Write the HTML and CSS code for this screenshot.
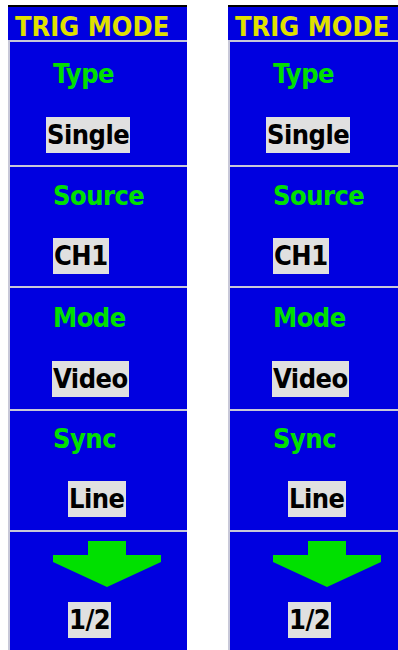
FILE: index.html
```html
<!DOCTYPE html>
<html>
<head>
  <title>Trig Mode Menu</title>
  <link rel="stylesheet" href="styles.css">
</head>
<body>
  <div class="screens">
    <div class="menu">
      <div class="menu-title">TRIG MODE</div>
      <div class="menu-item item-type">
        <div class="item-label">Type</div>
        <span class="item-value value-single">Single</span>
      </div>
      <div class="menu-item item-source">
        <div class="item-label">Source</div>
        <span class="item-value value-ch">CH1</span>
      </div>
      <div class="menu-item item-mode">
        <div class="item-label">Mode</div>
        <span class="item-value value-video">Video</span>
      </div>
      <div class="menu-item item-sync">
        <div class="item-label">Sync</div>
        <span class="item-value value-line">Line</span>
      </div>
      <div class="menu-item item-page">
        <svg class="page-arrow" width="108" height="46" viewBox="0 0 108 46">
          <polygon points="35,0 73,0 73,14 108,14 108,21 54,46 0,21 0,14 35,14" fill="#00e000"/>
        </svg>
        <span class="item-value value-page">1/2</span>
      </div>
    </div>

    <div class="menu">
      <div class="menu-title">TRIG MODE</div>
      <div class="menu-item item-type">
        <div class="item-label">Type</div>
        <span class="item-value value-single">Single</span>
      </div>
      <div class="menu-item item-source">
        <div class="item-label">Source</div>
        <span class="item-value value-ch">CH1</span>
      </div>
      <div class="menu-item item-mode">
        <div class="item-label">Mode</div>
        <span class="item-value value-video">Video</span>
      </div>
      <div class="menu-item item-sync">
        <div class="item-label">Sync</div>
        <span class="item-value value-line">Line</span>
      </div>
      <div class="menu-item item-page">
        <svg class="page-arrow" width="108" height="46" viewBox="0 0 108 46">
          <polygon points="35,0 73,0 73,14 108,14 108,21 54,46 0,21 0,14 35,14" fill="#00e000"/>
        </svg>
        <span class="item-value value-page">1/2</span>
      </div>
    </div>
  </div>
</body>
</html>
```

FILE: styles.css
```css
html, body {
  margin: 0;
  height: 100%;
  background: #fff;
  overflow: hidden;
}

body {
  font-family: "DejaVu Sans Condensed", "DejaVu Sans", sans-serif;
  font-stretch: condensed;
  font-weight: bold;
  font-size: 27px;
}

.screens {
  display: flex;
  gap: 41px;
  padding: 5px 0 0 8px;
  height: 100%;
  box-sizing: border-box;
}

.menu {
  flex: 0 0 179px;
  display: flex;
  flex-direction: column;
  background: #0000e0;
}

.menu-title {
  height: 30px;
  padding: 3px 0 0 7px;
  border-top: 2px solid #000;
  color: #e0e000;
  line-height: 33px;
  white-space: nowrap;
}

.menu-item {
  box-sizing: border-box;
  border-top: 2px solid #c8c8d8;
  border-left: 2px solid #c8c8d8;
  padding-left: 43px;
  display: flex;
  flex-direction: column;
  align-items: flex-start;
  letter-spacing: -0.5px;
}

.item-label {
  color: #00e000;
  line-height: 27px;
}

.item-value {
  display: inline-block;
  height: 36px;
  line-height: 36px;
  padding: 0 1px;
  background: #e0e0e0;
  color: #000;
}

.item-type { height: 125px; padding-top: 18px; }
.item-source { height: 121px; padding-top: 15px; }
.item-mode { height: 123px; padding-top: 16px; }
.item-sync { height: 121px; padding-top: 14px; }
.item-page { flex: 1; padding-top: 9px; }

.item-type .item-value { margin-top: 30px; }
.item-source .item-value { margin-top: 29px; }
.item-mode .item-value { margin-top: 30px; }
.item-sync .item-value { margin-top: 29px; }

.value-single { margin-left: -7px; }
.value-ch { margin-left: 0; }
.value-video { margin-left: -1px; }
.value-line { margin-left: 15px; }
.value-page { margin-left: 15px; margin-top: 15px; }

.page-arrow {
  display: block;
}
```
